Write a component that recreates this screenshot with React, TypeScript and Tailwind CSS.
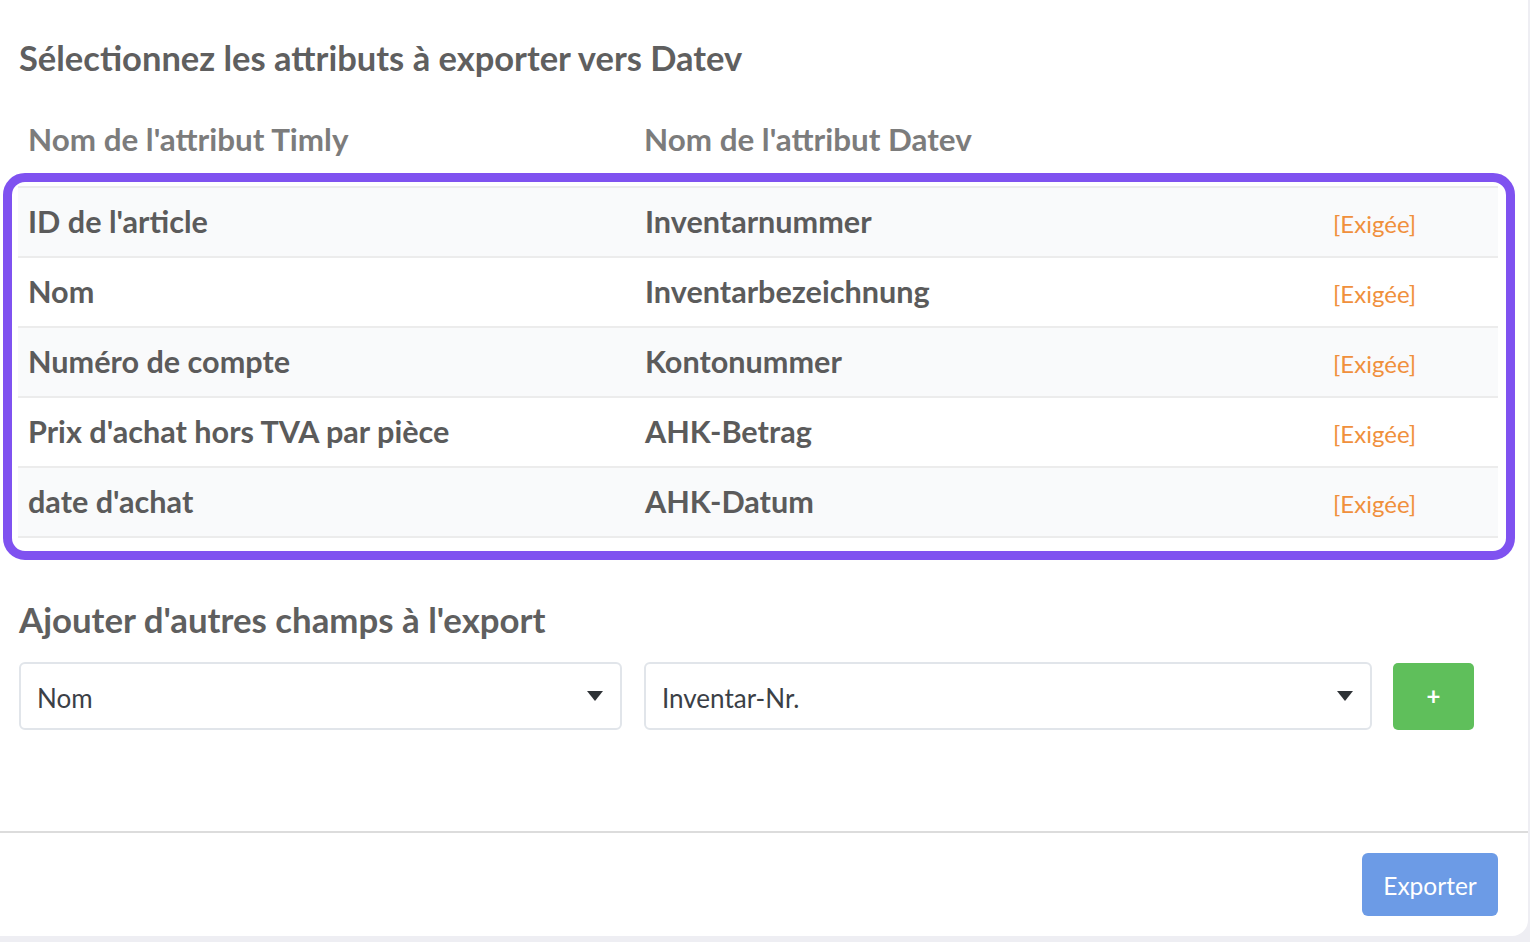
import React from 'react';

const rows = [
  { timly: "ID de l'article", datev: 'Inventarnummer' },
  { timly: 'Nom', datev: 'Inventarbezeichnung' },
  { timly: 'Numéro de compte', datev: 'Kontonummer' },
  { timly: "Prix d'achat hors TVA par pièce", datev: 'AHK-Betrag' },
  { timly: "date d'achat", datev: 'AHK-Datum' },
];

const font = { fontFamily: 'Lato, "Noto Sans", sans-serif' };

const SelectBox = ({ value, width }: { value: string; width: string }) => (
  <div
    className={`${width} h-[68px] flex items-center justify-between pl-[16px] pr-[17px] border-2 border-[#e1e5ea] rounded-[6px] bg-white`}
  >
    <span className="pt-[5px] text-[26px] text-[#3b4046]">{value}</span>
    <svg width="16" height="10" viewBox="0 0 16 10">
      <path d="M0 0 L16 0 L8 10 Z" fill="#2f3337" />
    </svg>
  </div>
);

export default function App() {
  return (
    <div className="min-h-screen w-full bg-[#eeeef3]" style={font}>
      <div className="w-[1528px] h-[936px] bg-white rounded-br-[16px] flex flex-col">
        {/* body */}
        <div className="h-[831px] pl-[19px] pt-[38px]">
          <h2 className="text-[34.5px] leading-[40px] font-bold text-[#5f5f5f]">
            Sélectionnez les attributs à exporter vers Datev
          </h2>

          <div className="mt-[41px] grid grid-cols-[616px_688px_175px] pl-[9px] text-[31.4px] leading-[40px] font-bold text-[#7c7c7c]">
            <div>Nom de l'attribut Timly</div>
            <div>Nom de l'attribut Datev</div>
          </div>

          {/* highlighted mapping table */}
          <div className="mt-[14px] -ml-[16px] w-[1512px] border-[9px] border-[#7f52f0] rounded-[22px] pt-[4px] pb-[13px] pl-[6px] pr-[8px]">
            <div className="border-t-2 border-[#ececec]">
              {rows.map((r, i) => (
                <div
                  key={r.timly}
                  className={`grid grid-cols-[617px_688px_175px] h-[70px] items-center border-b-2 border-[#ececec] ${
                    i % 2 === 0 ? 'bg-[#f9fafb]' : 'bg-white'
                  }`}
                >
                  <div className="pl-[10px] text-[30.6px] font-bold text-[#5b5b5b]">{r.timly}</div>
                  <div className="pl-[10px] text-[30.6px] font-bold text-[#5b5b5b]">{r.datev}</div>
                  <div className="pl-[10px] pt-[3px] text-[24px] text-[#f0903c]">[Exigée]</div>
                </div>
              ))}
            </div>
          </div>

          <h2 className="mt-[40px] text-[34.8px] leading-[40px] font-bold text-[#5f5f5f]">
            Ajouter d'autres champs à l'export
          </h2>

          <div className="mt-[22px] flex items-center">
            <SelectBox value="Nom" width="w-[603px]" />
            <div className="w-[22px]" />
            <SelectBox value="Inventar-Nr." width="w-[728px]" />
            <button className="ml-[21px] w-[81px] h-[67px] rounded-[5px] bg-[#5fbf5b] text-white text-[24px] font-bold flex items-center justify-center">
              +
            </button>
          </div>
        </div>

        {/* footer */}
        <div className="border-t-2 border-[#dcdcdc] flex justify-end pt-[20px] pr-[30px]">
          <button className="w-[136px] h-[63px] pt-[3px] rounded-[6px] bg-[#6c9be6] text-white text-[24.5px]">
            Exporter
          </button>
        </div>
      </div>
    </div>
  );
}
